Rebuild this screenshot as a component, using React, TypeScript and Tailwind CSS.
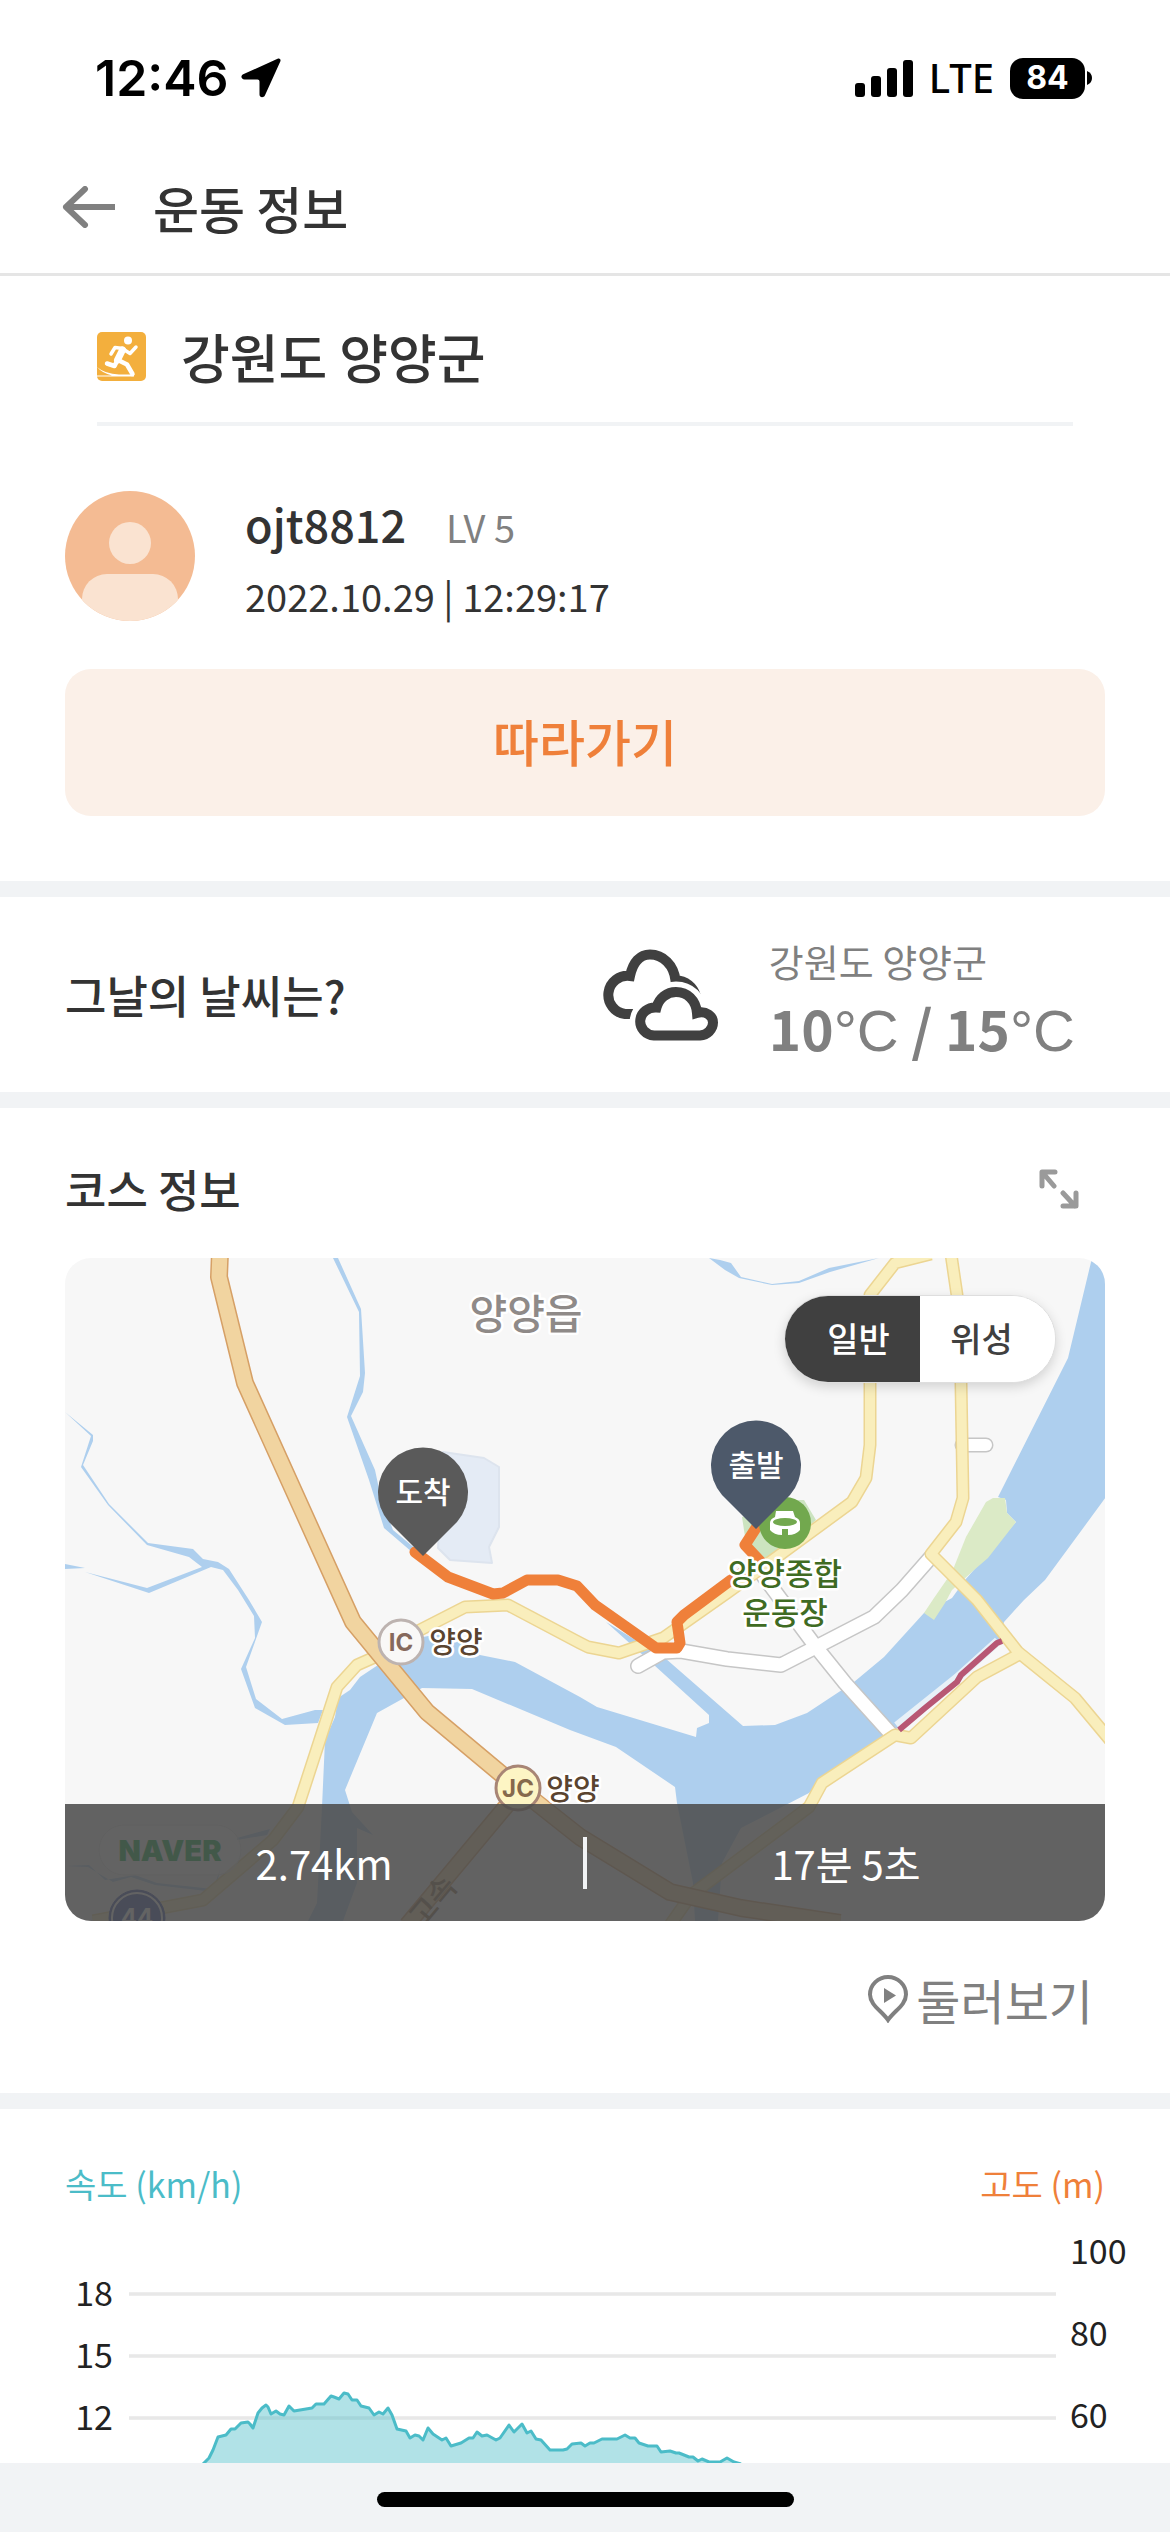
import { useState } from "react"

// 경로 / 강 / 도로 좌표 (지도 기준 1040 x 663)
const YELLOW_ROADS = [
  "28,663 138,642 208,582 233,549 272,429 292,407 310,399 355,372 400,349 443,347 515,385 523,389 554,395 598,380 662,335 712,299 787,244 801,220 805,187 805,37 830,5 866,-4",
  "886,-4 892,37 896,125 898,240 891,264 866,296 912,342 953,394 1010,440 1045,482",
  "953,397 912,419 846,480 830,477 757,525 744,549 626,637 605,667",
]

const WHITE_ROADS = [
  "573,408 598,394 616,393 662,401 716,407 751,389 809,359 837,332 866,299",
  "697,316 751,389 780,425 826,476",
]

const HIGHWAY = "155,-6 154,19 180,125 278,342 288,364 362,454 435,515 453,530 515,579 605,634 676,650 775,665"

const ROUTE =
  "350,294 383,319 428,336 438,335 462,322 493,322 512,328 530,347 591,390 612,390 615,385 612,364 619,357 666,322 695,303 680,287 691,270"

const WATER = [
  "273,440 285,432 295,419 310,409 358,379 385,374 415,397 450,404 515,439 532,449 631,479 632,470 644,465 644,457 589,407 541,364 559,375 600,400 678,468 710,467 742,455 789,424 819,399 859,355 887,340 900,322 951,264 942,255 941,242 933,239 1003,100 1027,0 1041,0 1041,239 980,322 959,342 939,364 934,382 832,470 755,525 744,535 676,570 657,605 653,663 630,663 628,625 612,545 610,529 551,489 505,472 407,431 357,430 312,455 280,532 287,554 308,577 292,570 292,625 278,663 243,663 252,645 257,549 260,482 270,459",
  "268,0 273,0 296,51 300,115 298,134 286,158 310,212 316,240 328,272 352,292 347,294 319,270 304,222 282,159 295,118 294,54",
  "0,154 28,177 28,183 18,207 44,246 83,285 128,291 138,301 153,304 164,311 184,342 197,364 181,409 191,441 217,461 250,452 258,452 253,465 220,467 190,450 176,411 190,380 189,358 173,332 158,312 146,309 84,335 20,314 82,330 137,309 124,299 82,287 43,247 16,209 26,178",
  "0,306 20,310 0,311",
  "644,0 655,2 666,5 676,19 707,26 734,23 764,10 814,0 765,14 734,25 707,27 674,20 660,12",
  "172,580 205,571 202,577 172,582",
  "0,608 24,607 40,622 70,617 92,625 148,631 155,612 150,634 90,627 66,619 48,624 23,609",
]

// 속도 그래프 샘플
const SPEED =
  "74,170 80,164 84,156 89,143 97,141 102,135 106,135 112,129 119,128 121,130 124,134 129,119 133,114 137,111 139,113 142,120 147,117 151,120 155,121 160,112 165,117 183,114 187,110 195,110 202,102 205,103 210,105 215,99 219,100 223,106 228,106 232,112 240,114 245,121 250,118 254,120 259,114 263,121 268,135 277,137 281,144 286,141 290,142 294,146 299,134 304,140 313,146 317,144 322,152 332,149 340,144 344,144 348,138 353,142 358,141 367,146 371,144 380,131 385,138 393,130 398,139 402,137 407,145 412,146 421,156 429,156 434,156 438,155 443,150 452,149 456,152 461,149 465,149 473,145 488,145 496,141 501,144 506,144 510,149 519,152 528,152 532,158 541,157 547,159 550,159 560,163 564,163 569,167 573,165 580,168 591,168 598,164 605,168 612,170"

function StatusBar() {
  return (
    <div className="flex h-[140px] items-center justify-between pt-4 pl-[95px] pr-[78px] text-black">
      <div className="flex items-center gap-3 font-['Inter'] text-[50px] font-semibold">
        <span>12:46</span>
        <svg viewBox="0 0 40 40" className="h-10 w-10" fill="currentColor">
          <path d="M36.600.8C38.400 0 40 1.200 39.400 3.200L24 37.200C22.600 40.200 18.500 39.700 18.500 36.500V23.500Q18.500 21.500 16.500 21.500H3.500C.3 21.500-.8 17.800 2.200 16.300Z" />
        </svg>
      </div>
      <div className="flex items-center gap-4">
        <svg viewBox="0 0 58 37" className="h-[37px] w-[58px]" fill="currentColor">
          <rect x="0" y="23" width="10" height="14" rx="3" />
          <rect x="16" y="16" width="10" height="21" rx="3" />
          <rect x="32" y="8" width="10" height="29" rx="3" />
          <rect x="48" y="0" width="10" height="37" rx="3" />
        </svg>
        <span className="font-['Noto_Sans'] text-[40px] font-medium">LTE</span>
        <div className="flex items-center gap-[2px]">
          <div className="flex h-[41px] w-[75px] items-center justify-center rounded-[13px] bg-black font-['Inter'] text-[32px] font-bold text-white">
            84
          </div>
          <svg viewBox="0 0 5 14" className="h-[14px] w-[5px]" fill="currentColor">
            <path d="M0 0Q5 2 5 7T0 14Z" />
          </svg>
        </div>
      </div>
    </div>
  )
}

function RunnerIcon() {
  return (
    <svg viewBox="0 0 49 49" className="h-[49px] w-[49px]">
      <rect width="49" height="49" rx="5" fill="#f3af3d" />
      <circle cx="31" cy="8.500" r="4" fill="#fff" />
      <g fill="none" stroke="#fff" strokeLinecap="round" strokeLinejoin="round">
        <path d="M14 22L18 15.500L26 16.500" strokeWidth="3.500" />
        <path d="M26 17L33 21.500L39 15" strokeWidth="3.500" />
        <path d="M25.500 18L20.500 28" strokeWidth="7" />
        <path d="M20 29L17.500 34L10 31.500" strokeWidth="4.500" />
        <path d="M21 28L30 32.500L35.500 42" strokeWidth="4.500" />
      </g>
      <path d="M0 35Q8 42 22 42.500L37 42.500V44.500H0V43.500H15Q5 41 0 35Z" fill="#fff" />
    </svg>
  )
}

function CloudIcon() {
  return (
    <svg viewBox="0 0 115 92" className="h-[92px] w-[115px]" fill="none" stroke="#404040" strokeWidth="10">
      <path d="M31 65H22A17.500 17.500 0 1 1 27 27C30 13 37 5.500 47 5.500C60 5.500 71 16 72.500 31.500C83 31.500 90 38 93 47" />
      <path
        d="M51 86.500A15 14 0 0 1 53.500 58.500C56 49 64 43 73 43C84 43 93 51 94 64C103 61.500 110 67 110 73.500A14 13 0 0 1 97 86.500Z"
        fill="#fff"
        stroke="#fff"
        strokeWidth="21"
      />
      <path d="M51 86.500A15 14 0 0 1 53.500 58.500C56 49 64 43 73 43C84 43 93 51 94 64C103 61.500 110 67 110 73.500A14 13 0 0 1 97 86.500Z" />
    </svg>
  )
}

function Pin({ x, y, fill, label }: { x: number; y: number; fill: string; label: string }) {
  return (
    <g transform={`translate(${x} ${y})`}>
      <path d="M0 0L-34 -34A45 45 0 1 1 34 -34Z" fill={fill} />
      <text y="-53" fill="#fff" fontSize="30" fontWeight="500" textAnchor="middle">
        {label}
      </text>
    </g>
  )
}

function CourseMap() {
  return (
    <svg
      viewBox="0 0 1040 663"
      preserveAspectRatio="xMidYMid slice"
      className="absolute inset-0 h-full w-full"
      strokeLinejoin="round"
    >
      <rect width="1040" height="663" fill="#f7f7f7" />
      <polygon
        points="378,194 419,200 434,209 434,269 424,289 427,305 385,302 373,290"
        fill="#e4ebf5"
        stroke="#dde4ee"
        strokeWidth="2"
      />
      {WATER.map((p) => (
        <polygon key={p} points={p} fill="#aecfee" />
      ))}
      <polygon points="677,259 730,242 739,242 751,262 705,302 683,298" fill="#cce4c0" />
      <polygon
        points="921,244 928,240 940,240 942,255 951,264 923,300 909,312 887,332 880,345 869,362 859,355 869,340 887,314 901,279"
        fill="#dbeac6"
      />

      <g fill="none">
        {WHITE_ROADS.map((p) => (
          <polyline key={p} points={p} stroke="#c6c6c6" strokeWidth="16" strokeLinecap="round" />
        ))}
        <path d="M897 187H921" stroke="#c6c6c6" strokeWidth="15" strokeLinecap="round" />
        {WHITE_ROADS.map((p) => (
          <polyline key={p} points={p} stroke="#fff" strokeWidth="13" strokeLinecap="round" />
        ))}
        <path d="M897 187H921" stroke="#fff" strokeWidth="12" strokeLinecap="round" />
        {YELLOW_ROADS.map((p) => (
          <polyline key={p} points={p} stroke="#ecd592" strokeWidth="13" />
        ))}
        {YELLOW_ROADS.map((p) => (
          <polyline key={p} points={p} stroke="#f9eebc" strokeWidth="10" />
        ))}
        <polyline points="832,468 892,420 933,383" stroke="#e8f1f8" strokeWidth="9" />
        <polyline points="834,472 860,450 892,424 896,417 932,385 937,383" stroke="#b85774" strokeWidth="6" />
        <path d="M448 540L342 667" stroke="#d6a066" strokeWidth="17" />
        <path d="M448 540L342 667" stroke="#f1d4a0" strokeWidth="14" />
        <polyline points={HIGHWAY} stroke="#d6a066" strokeWidth="18" />
        <polyline points={HIGHWAY} stroke="#f1d4a0" strokeWidth="15" />
        <polyline points={ROUTE} stroke="#ef803a" strokeWidth="11" strokeLinecap="round" />
      </g>

      <circle cx="720" cy="265" r="26" fill="#72a84e" />
      <path d="M711 253H728L730 259Q735 261 735 265V272Q731 277 723 277V271H717V277Q709 277 705 272V265Q705 261 710 259Z" fill="#fff" />
      <ellipse cx="720" cy="264" rx="12" ry="4" fill="#72a84e" />

      <g
        fontFamily="'Noto Sans CJK KR', sans-serif"
        stroke="#fff"
        strokeWidth="5"
        paintOrder="stroke"
        textAnchor="middle"
        fontWeight="500"
      >
        <text x="461" y="71" fontSize="41" fill="#8f8a88">양양읍</text>
        <text x="720" y="327" fontSize="31" fill="#3f6b23">양양종합</text>
        <text x="720" y="366" fontSize="31" fill="#3f6b23">운동장</text>
        <text x="391" y="395" fontSize="29" fill="#5a4430">양양</text>
        <text x="508" y="542" fontSize="29" fill="#5a4430">양양</text>
        <text transform="translate(376 650) rotate(-50)" fontSize="30" fill="#8a6a4a" stroke="none">고속</text>
      </g>

      <g fontFamily="Inter, sans-serif" fontWeight="700" fontSize="24" textAnchor="middle">
        <circle cx="336" cy="384" r="22" fill="#f9f8f7" stroke="#bdb3b0" strokeWidth="3" />
        <text x="336" y="393" fill="#86695c">IC</text>
        <circle cx="453" cy="530" r="22" fill="#fdf5c4" stroke="#a88575" strokeWidth="3" />
        <text x="453" y="539" fill="#86694c">JC</text>
        <circle cx="72" cy="660" r="28" fill="#3c50a8" stroke="#3c50a8" />
        <circle cx="72" cy="660" r="25" fill="none" stroke="#fff" strokeWidth="2" />
        <text x="72" y="668" fill="#fff">44</text>
        <rect x="34" y="567" width="142" height="50" rx="25" fill="#fff" fillOpacity="0.400" stroke="#e6e6e6" />
        <text x="105" y="603" fill="#03a73c" fontSize="29" fontWeight="900">NAVER</text>
      </g>

      <g fontFamily="'Noto Sans CJK KR', sans-serif">
        <Pin x={358} y={298} fill="#5a5a5a" label="도착" />
        <Pin x={691} y={271} fill="#4d596a" label="출발" />
      </g>
    </svg>
  )
}

function Divider() {
  return <div className="h-4 bg-[#f1f3f5]" />
}

export default function App() {
  const [mapType, setMapType] = useState("일반")

  return (
    <div className="flex w-full flex-col bg-white font-['Noto_Sans_CJK_KR',sans-serif] text-[#333]">
      <StatusBar />
      <header className="flex h-[136px] items-center gap-[38px] border-b-3 border-[#e5e5e5] pl-[62px]">
        <button aria-label="뒤로">
          <svg viewBox="0 0 53 42" className="h-[42px] w-[53px]" fill="none" stroke="#808080" strokeWidth="6">
            <path d="M53 21H4M23 3L4 21L23 39" strokeLinejoin="round" strokeLinecap="round" />
          </svg>
        </button>
        <h1 className="text-[50px] leading-none font-medium">운동 정보</h1>
      </header>

      <section className="px-[65px] pb-[65px]">
        <div className="mx-8 flex h-[150px] items-center gap-[35px] border-b-4 border-[#f1f3f5] pt-[14px]">
          <RunnerIcon />
          <h2 className="text-[53px] leading-none font-medium">강원도 양양군</h2>
        </div>
        <div className="mt-[65px] flex h-[130px] items-center gap-[50px]">
          <svg viewBox="0 0 130 130" className="h-[130px] w-[130px]">
            <clipPath id="avatar">
              <circle cx="65" cy="65" r="65" />
            </clipPath>
            <g clipPath="url(#avatar)">
              <rect width="130" height="130" fill="#f4bb93" />
              <circle cx="65" cy="52" r="21" fill="#fae3d1" />
              <rect x="17" y="83" width="96" height="70" rx="25" fill="#fae3d1" />
            </g>
          </svg>
          <div className="flex flex-col gap-3 pt-2">
            <div className="flex h-[60px] items-baseline gap-10 leading-[60px]">
              <span className="text-[45px] font-medium">ojt8812</span>
              <span className="text-[38px] text-[#808080]">LV 5</span>
            </div>
            <span className="text-[38px] leading-[60px]">2022.10.29 | 12:29:17</span>
          </div>
        </div>
        <button className="mt-12 h-[147px] w-full rounded-[26px] bg-[#fbf0e8] pb-1 text-[50px] font-medium text-[#ef803a]">
          따라가기
        </button>
      </section>
      <Divider />

      <section className="flex h-[195px] items-center pl-[65px] pr-[95px]">
        <h2 className="flex-1 text-[45px] font-medium">그날의 날씨는?</h2>
        <CloudIcon />
        <div className="ml-[51px] flex flex-col pt-2 text-[#808080]">
          <span className="text-[38px] leading-[60px]">강원도 양양군</span>
          <span className="text-[55px] leading-[72px] font-bold">
            10<span className="font-['Liberation_Sans'] text-[58px] font-normal">°C</span> / 15
            <span className="font-['Liberation_Sans'] text-[58px] font-normal">°C</span>
          </span>
        </div>
      </section>
      <Divider />

      <section className="px-[65px]">
        <div className="flex h-[150px] items-center justify-between pt-3 pr-[26px]">
          <h2 className="text-[45px] font-medium">코스 정보</h2>
          <button aria-label="지도 확대">
            <svg viewBox="0 0 40 40" className="h-10 w-10" fill="none" stroke="#9a9a9a" strokeWidth="5" strokeLinecap="round" strokeLinejoin="round">
              <path d="M15 17L4 4M3 17V3H16M24 24L36 37M37 24V37H24" />
            </svg>
          </button>
        </div>
        <div className="relative h-[663px] overflow-hidden rounded-[26px]">
          <CourseMap />
          <div className="absolute top-[37px] right-[49px] flex h-[88px] overflow-hidden rounded-full border border-[#dedede] bg-white shadow-[0_4px_12px_rgba(0,0,0,0.15)]">
            {["일반", "위성"].map((type) => (
              <button
                key={type}
                onClick={() => setMapType(type)}
                className={
                  "w-[135px] pb-1 text-[34px] font-medium first:pl-3 last:pr-3 " +
                  (mapType === type ? "bg-[#404040] text-white" : "bg-white text-[#404040]")
                }
              >
                {type}
              </button>
            ))}
          </div>
          <div className="absolute inset-x-0 bottom-0 flex h-[117px] items-center bg-[#4c4c4c]/87 text-[40px] text-white">
            <span className="flex-1 text-center">2.74km</span>
            <span className="h-[52px] w-1 bg-[#f1f3f5]" />
            <span className="flex-1 text-center">17분 5초</span>
          </div>
        </div>
        <div className="flex h-[172px] items-center justify-end pb-4 pr-3">
          <button className="flex items-center gap-2 text-[48px] text-[#808080]">
            <svg viewBox="0 0 40 48" className="h-12 w-10" fill="none" stroke="#808080" strokeWidth="4">
              <path d="M20 45C14 36 2 30 2 19.500A18 17.500 0 0 1 38 19.500C38 30 26 36 20 45Z" />
              <path d="M16 13V28L28 20.500Z" fill="#808080" stroke="none" />
            </svg>
            둘러보기
          </button>
        </div>
      </section>
      <Divider />

      <section>
        <div className="flex h-[120px] items-center justify-between px-[65px] pt-7 text-[34px]">
          <span className="text-[#4bbcc8]">속도 (km/h)</span>
          <span className="text-[#ef803a]">고도 (m)</span>
        </div>
        <div className="flex h-[234px] text-[34px] text-[#222]">
          <div className="flex w-[113px] flex-col pt-8 text-right leading-[62px]">
            <span>18</span>
            <span>15</span>
            <span>12</span>
          </div>
          <svg viewBox="0 0 927 234" preserveAspectRatio="none" className="ml-4 h-[234px] min-w-0 flex-1">
            <g stroke="#e8e8e8" strokeWidth="3.500">
              <path d="M0 65H927M0 127H927M0 189H927" />
            </g>
            <g transform="translate(0 65)">
              <polygon points={`${SPEED} 612,190 74,190`} fill="#4bbcc8" fillOpacity="0.430" />
              <polyline points={SPEED} fill="none" stroke="#4bbcc8" strokeWidth="3" strokeLinejoin="round" />
            </g>
          </svg>
          <div className="ml-[14px] flex w-[100px] flex-col gap-8 leading-[50px]">
            <span className="-mt-1">100</span>
            <span>80</span>
            <span>60</span>
          </div>
        </div>
      </section>

      <footer className="flex h-[69px] items-center justify-center bg-[#f1f3f5] pt-1">
        <div className="h-[15px] w-[417px] rounded-full bg-black" />
      </footer>
    </div>
  )
}
